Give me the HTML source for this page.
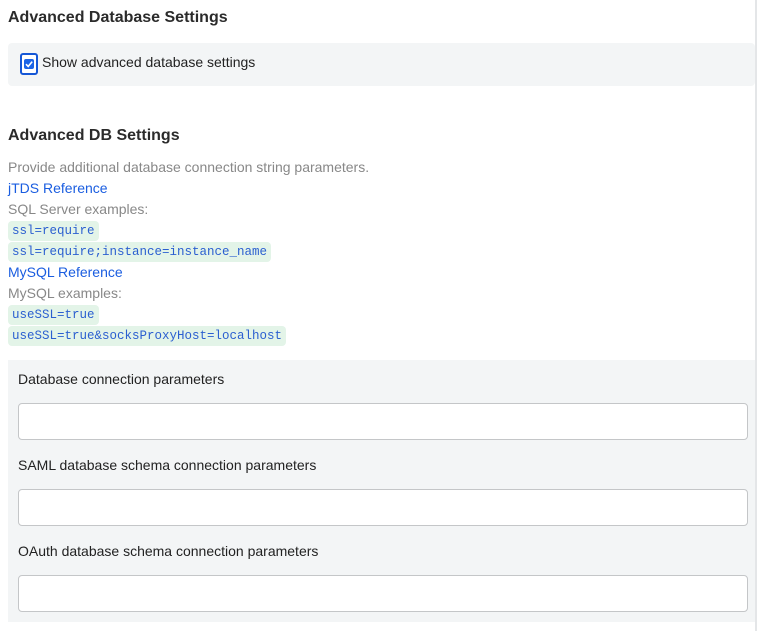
<!DOCTYPE html>
<html><head><style>
body{margin:0;background:#fff;font-family:"Liberation Sans",sans-serif;color:#222;width:757px;height:631px;overflow:hidden;position:relative}
.vl{position:absolute;left:755px;top:0;width:2px;height:631px;background:#e4e6e8}
h2{position:absolute;left:8px;margin:0;font-size:16px;font-weight:bold;color:#2b2b2b}
.p1{position:absolute;left:8px;top:43px;width:747px;height:43px;background:#f3f5f6;border-radius:4px}
.cb{position:absolute;left:20px;top:53px;width:14px;height:18px;border:2px solid #1557d6;border-radius:3px;background:#fff}
.cb i{position:absolute;left:2px;top:4px;width:10px;height:10px;background:#1b64e6;border-radius:2px}
.cb svg{position:absolute;left:2px;top:4px}
.lbl{position:absolute;left:42px;top:54px;font-size:14px;color:#222}
.t{position:absolute;left:8px;font-size:14px;line-height:21px}
.g{color:#888}.a{color:#1a5de0}
code{position:absolute;left:8px;font-family:"Liberation Mono",monospace;font-size:12.5px;color:#2b5fd0;background:#e3f4e8;border-radius:4px;padding:2px 4px;line-height:16px}
.p2{position:absolute;left:8px;top:360px;width:747px;height:262px;background:#f3f5f6}
.fl{position:absolute;left:18px;font-size:14px;color:#222}
.in{position:absolute;left:18px;width:728px;height:35px;border:1px solid #c4c6c8;border-radius:4px;background:#fff}
</style></head><body>
<div class="vl"></div>
<h2 style="top:9px">Advanced Database Settings</h2>
<div class="p1"></div>
<div class="cb"><i></i><svg width="10" height="10" viewBox="0 0 10 10"><path d="M2 5.2L4.2 7.4L8.2 2.6" stroke="#fff" stroke-width="1.6" fill="none"/></svg></div>
<div class="lbl">Show advanced database settings</div>
<h2 style="top:127px">Advanced DB Settings</h2>
<div class="t g" style="top:157px">Provide additional database connection string parameters.</div>
<div class="t a" style="top:178px">jTDS Reference</div>
<div class="t g" style="top:199px">SQL Server examples:</div>
<code style="top:221px">ssl=require</code>
<code style="top:242px">ssl=require;instance=instance_name</code>
<div class="t a" style="top:262px">MySQL Reference</div>
<div class="t g" style="top:283px">MySQL examples:</div>
<code style="top:305px">useSSL=true</code>
<code style="top:326px">useSSL=true&amp;socksProxyHost=localhost</code>
<div class="p2"></div>
<div class="fl" style="top:371px">Database connection parameters</div>
<div class="in" style="top:403px"></div>
<div class="fl" style="top:457px">SAML database schema connection parameters</div>
<div class="in" style="top:489px"></div>
<div class="fl" style="top:543px">OAuth database schema connection parameters</div>
<div class="in" style="top:575px"></div>
</body></html>
